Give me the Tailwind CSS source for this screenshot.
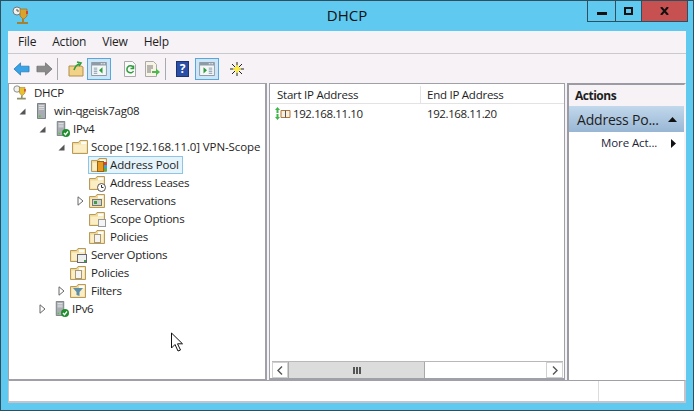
<!DOCTYPE html>
<html>
<head>
<meta charset="utf-8">
<script src="https://cdn.jsdelivr.net/npm/@tailwindcss/browser@4"></script>
</head>
<body class="w-[694px] h-[411px] overflow-hidden font-['Open_Sans','Noto_Sans',sans-serif] text-[11.5px] tracking-[-0.25px] text-[#1e1e1e]">
<svg width="0" height="0" class="absolute">
  <defs>
    <symbol id="folder" viewBox="0 0 16 16">
      <path d="M.5 14.500V3.500h6l1.500-2h7.500v13z" fill="#f0d896" stroke="#b89a5c"/>
      <path d="M9 2.500h5.500v3H9z" fill="#fdfdf8"/>
      <path d="M1.500 13.500V5.500h13v8z" fill="#fbeec4"/>
    </symbol>
    <symbol id="server" viewBox="0 0 12 18">
      <path d="M1.500.5h9v17h-9z" fill="#a9adb2" stroke="#6f7479"/>
      <path d="M3 3h6M3 5h6M3 7h6" stroke="#e6e8ea"/>
      <path d="M3 14h2v2H3z" fill="#58c04a"/>
    </symbol>
    <symbol id="check" viewBox="0 0 8 8">
      <circle cx="4" cy="4" r="4" fill="#1f8f2e"/>
      <path d="M2 4l1.500 1.700L6 2.500" fill="none" stroke="#fff" stroke-width="1.300"/>
    </symbol>
    <symbol id="open" viewBox="0 0 7 7"><path d="M6.500 0.500v6h-6z" fill="#555"/></symbol>
    <symbol id="closed" viewBox="0 0 7 10"><path d="M1 .8l5 4.200-5 4.200z" fill="#fff" stroke="#666"/></symbol>
    <symbol id="pane" viewBox="0 0 18 16">
      <path d="M.5.5h17v15H.5z" fill="#f4f6f8" stroke="#7b8a96"/>
      <path d="M1 1h16v3H1z" fill="#8d9ba6"/>
      <path d="M14 2h2M11 2h2" stroke="#fff"/>
    </symbol>
  </defs>
</svg>

<div class="relative w-[694px] h-[411px] flex flex-col bg-[#5fc9ef] border border-[#2f4f5f] px-[7px] pb-[7px]">
  <!-- title bar -->
  <div class="relative h-[30px] shrink-0 flex items-center justify-center text-[15px] tracking-normal text-[#111] pb-[1px]">
    <span>DHCP</span>
    <svg class="absolute left-[4px] top-[5px]" width="20" height="20" viewBox="0 0 20 20">
      <circle cx="5" cy="5" r="4" fill="#f0f0ee" stroke="#777"/>
      <path d="M5 3v2h2" stroke="#555" fill="none"/>
      <path d="M8 3h7v7l-3 3h-1l-3-3z" fill="#d9a32c" stroke="#8a6a1e" stroke-width=".6"/>
      <path d="M14 5h2v3h-2z" fill="#d8432c"/>
      <path d="M11 13v3M5 17h11" stroke="#a58136" stroke-width="2"/>
    </svg>
    <div class="absolute right-[-2px] top-0 flex h-[21px] border border-t-0 border-[#2f4f5f]">
      <div class="w-[28px] flex items-center justify-center border-r border-[#2f4f5f]"><div class="w-[10px] h-[3px] bg-[#111] mt-[5px]"></div></div>
      <div class="w-[26px] flex items-center justify-center border-r border-[#2f4f5f]"><div class="w-[9px] h-[8px] border-2 border-[#111]"></div></div>
      <div class="w-[45px] flex items-center justify-center bg-[#c75050]">
        <svg width="9" height="8" viewBox="0 0 9 8"><path d="M1 0l7 8M8 0L1 8" stroke="#111" stroke-width="2" fill="none"/></svg>
      </div>
    </div>
  </div>

  <!-- window body -->
  <div class="flex-1 flex flex-col bg-[#f6f2f6] min-h-0">
    <!-- menu -->
    <div class="h-[23px] shrink-0 flex items-center gap-[16px] pl-[10px] border-b border-[#c9c9cf] text-[12px] tracking-[-0.2px]">
      <span>File</span><span>Action</span><span>View</span><span>Help</span>
    </div>
    <!-- toolbar -->
    <div class="h-[29px] shrink-0 flex items-center pl-[5px]">
      <svg width="17" height="16" viewBox="0 0 18 16"><path d="M1 8l7-6.500V5h9v6H8v3.500z" fill="#38a3e6" stroke="#1e6fb0" stroke-width=".7"/></svg>
      <svg class="ml-[6px]" width="17" height="16" viewBox="0 0 18 16"><path d="M17 8l-7-6.500V5H1v6h9v3.500z" fill="#8a8a8a" stroke="#666" stroke-width=".7"/></svg>
      <div class="w-px h-[22px] bg-[#a8a8ae] ml-[4px]"></div>
      <svg class="ml-[10px]" width="16" height="16" viewBox="0 0 16 16"><path d="M1 5h12l2 1v9H1z" fill="#f2d286" stroke="#b08f4e"/><path d="M6 9c1-3 2-5 5-6M9 1l4 1-2 3" fill="none" stroke="#2f9d3c" stroke-width="1.600"/></svg>
      <div class="ml-[3px] w-[24px] h-[22px] flex items-center justify-center bg-[#cde6f7] border border-[#58a7dc]">
        <svg width="16" height="14" viewBox="0 0 18 16"><use href="#pane"/><path d="M3 7h4M3 9h4M3 11h4M3 13h4" stroke="#7f98a8"/><path d="M13 6l-4 3.500 4 3.500z" fill="#2f9d3c"/></svg>
      </div>
      <svg class="ml-[12px]" width="14" height="16" viewBox="0 0 14 16"><path d="M1.500.5h8l3 3v12h-11z" fill="#fafafa" stroke="#aaa"/><path d="M10 6a3.500 3.500 0 1 0 .5 4M10.500 4.500V7.500H7.500" fill="none" stroke="#2f9d3c" stroke-width="1.500"/></svg>
      <svg class="ml-[7px]" width="17" height="16" viewBox="0 0 17 16"><path d="M1.500.5h8l3 3v12h-11z" fill="#f7f4e6" stroke="#aaa"/><path d="M3 5h6M3 7h6M3 9h4M3 11h4" stroke="#777"/><path d="M8 10h4V7.500l4 3.500-4 3.500V12H8z" fill="#4fb84f"/></svg>
      <div class="w-px h-[22px] bg-[#a8a8ae] ml-[4px]"></div>
      <div class="ml-[10px] w-[13px] h-[16px] flex items-center justify-center bg-[#2b4fa6] border border-[#1d3470] text-white text-[12px] font-bold leading-none">?</div>
      <div class="ml-[6px] w-[24px] h-[22px] flex items-center justify-center bg-[#cde6f7] border border-[#58a7dc]">
        <svg width="16" height="14" viewBox="0 0 18 16"><use href="#pane"/><path d="M11 7h4M11 9h4M11 11h4M11 13h4" stroke="#7f98a8"/><path d="M5 6l4 3.500L5 13z" fill="#2f9d3c"/></svg>
      </div>
      <svg class="ml-[10px]" width="16" height="16" viewBox="0 0 16 16"><path d="M8 1v14M1 8h14M3 3l10 10M13 3L3 13" stroke="#222"/><circle cx="8" cy="8" r="2.500" fill="#ffef3a"/><path d="M8 4v8M4 8h8" stroke="#ffef3a" stroke-width="1.500"/></svg>
    </div>

    <!-- panes -->
    <div class="flex-1 flex min-h-0 gap-[2px]">
      <!-- tree -->
      <div class="w-[259px] shrink-0 bg-white border border-[#a0a0a8] border-r-2 whitespace-nowrap">
        <div class="h-[18px] flex items-center pl-[4px]"><svg width="16" height="16" viewBox="0 0 20 20"><circle cx="5" cy="5" r="4" fill="#f0f0ee" stroke="#777"/><path d="M8 3h7v7l-3 3h-1l-3-3z" fill="#e8c22c" stroke="#8a6a1e" stroke-width=".6"/><path d="M14 5h2v3h-2z" fill="#d8432c"/><path d="M11 13v3M5 17h11" stroke="#8f8f6a" stroke-width="2"/></svg><span class="ml-[5px]">DHCP</span></div>
        <div class="h-[18px] flex items-center pl-[10px]"><svg width="7" height="7"><use href="#open"/></svg><svg class="ml-[10px]" width="11" height="16"><use href="#server"/></svg><span class="ml-[7px]">win-qgeisk7ag08</span></div>
        <div class="h-[18px] flex items-center pl-[30px]"><svg width="7" height="7"><use href="#open"/></svg><span class="relative ml-[10px] w-[13px] h-[16px]"><svg width="10" height="15"><use href="#server"/></svg><svg class="absolute right-[-1px] bottom-0" width="8" height="8"><use href="#check"/></svg></span><span class="ml-[4px]">IPv4</span></div>
        <div class="h-[18px] flex items-center pl-[49px]"><svg width="7" height="7"><use href="#open"/></svg><svg class="ml-[7px]" width="16" height="16"><use href="#folder"/></svg><span class="ml-[3px] tracking-[-0.1px]">Scope [192.168.11.0] VPN-Scope</span></div>
        <div class="h-[18px] flex items-center pl-[79px]"><div class="flex items-center h-[18px] bg-[#e5f3fb] border border-[#8ec4e6]"><span class="relative w-[16px] h-[16px] ml-[2px]"><svg width="16" height="16"><use href="#folder"/></svg><span class="absolute left-[6px] top-[4px] w-[7px] h-[11px] bg-[#e89a1e] border border-[#9a6310]"></span><span class="absolute left-[13px] top-[5px] w-[3px] h-[3px] bg-[#d8432c]"></span><span class="absolute left-[13px] top-[8px] w-[3px] h-[3px] bg-[#3f9fd8]"></span><span class="absolute left-[13px] top-[11px] w-[3px] h-[3px] bg-[#58b04a]"></span></span><span class="ml-[3px] pr-[3px] tracking-[-0.1px]">Address Pool</span></div></div>
        <div class="h-[18px] flex items-center pl-[80px]"><span class="relative w-[16px] h-[16px]"><svg width="16" height="16"><use href="#folder"/></svg><svg class="absolute right-[-1px] bottom-[-1px]" width="9" height="9" viewBox="0 0 9 9"><circle cx="4.500" cy="4.500" r="4" fill="#fff" stroke="#555"/><path d="M4.500 2v2.500h2" stroke="#333" fill="none"/></svg></span><span class="ml-[5px]">Address Leases</span></div>
        <div class="h-[18px] flex items-center pl-[68px]"><svg width="7" height="10"><use href="#closed"/></svg><span class="relative ml-[5px] w-[16px] h-[16px]"><svg width="16" height="16"><use href="#folder"/></svg><span class="absolute left-[3px] top-[6px] w-[10px] h-[7px] bg-[#cfd6c8] border border-[#777]"></span><span class="absolute left-[5px] top-[8px] w-[3px] h-[3px] bg-[#3f9a4a]"></span></span><span class="ml-[5px]">Reservations</span></div>
        <div class="h-[18px] flex items-center pl-[80px]"><span class="relative w-[16px] h-[16px]"><svg width="16" height="16"><use href="#folder"/></svg><span class="absolute right-[-1px] bottom-0 w-[8px] h-[8px] bg-[#f4f4f4] border border-[#999]"></span></span><span class="ml-[5px]">Scope Options</span></div>
        <div class="h-[18px] flex items-center pl-[80px]"><span class="relative w-[16px] h-[16px]"><svg width="16" height="16"><use href="#folder"/></svg><span class="absolute left-[5px] top-[5px] w-[7px] h-[9px] bg-[#f4f4f4] border border-[#a8987a]"></span></span><span class="ml-[5px]">Policies</span></div>
        <div class="h-[18px] flex items-center pl-[61px]"><span class="relative w-[16px] h-[16px]"><svg width="16" height="16"><use href="#folder"/></svg><span class="absolute right-[-1px] bottom-0 w-[10px] h-[9px] bg-[#eef0f0] border border-[#667]"></span><span class="absolute right-0 bottom-px w-[2px] h-[2px] bg-[#3f9a4a]"></span></span><span class="ml-[5px]">Server Options</span></div>
        <div class="h-[18px] flex items-center pl-[61px]"><span class="relative w-[16px] h-[16px]"><svg width="16" height="16"><use href="#folder"/></svg><span class="absolute left-[5px] top-[5px] w-[7px] h-[9px] bg-[#f4f4f4] border border-[#a8987a]"></span></span><span class="ml-[5px]">Policies</span></div>
        <div class="h-[18px] flex items-center pl-[49px]"><svg width="7" height="10"><use href="#closed"/></svg><span class="relative ml-[5px] w-[16px] h-[16px]"><svg width="16" height="16"><use href="#folder"/><path d="M3 5h10L9.500 9v4l-3-1V9z" fill="#5f8fa8"/></svg></span><span class="ml-[5px]">Filters</span></div>
        <div class="h-[18px] flex items-center pl-[30px]"><svg width="7" height="10"><use href="#closed"/></svg><span class="relative ml-[9px] w-[13px] h-[16px]"><svg width="10" height="15"><use href="#server"/></svg><svg class="absolute right-[-1px] bottom-0" width="8" height="8"><use href="#check"/></svg></span><span class="ml-[4px]">IPv6</span></div>
      </div>

      <!-- list -->
      <div class="w-[296px] shrink-0 flex flex-col bg-white border border-[#a0a0a8] border-b-2 whitespace-nowrap">
        <div class="h-[20px] shrink-0 flex items-center border-b border-[#e3e3e6] pt-[2px]">
          <div class="w-[151px] h-full flex items-center pl-[7px] border-r border-[#e3e3e6]">Start IP Address</div>
          <div class="flex-1 pl-[6px]">End IP Address</div>
        </div>
        <div class="h-[20px] shrink-0 flex items-center tracking-[-0.4px]">
          <div class="w-[151px] flex items-center pl-[5px]">
            <svg width="16" height="14" viewBox="0 0 16 14"><path d="M2.500 0L5 3H3.500v3h-2V3H0z" fill="#3fb54a"/><path d="M2.500 13L5 10H3.500V7h-2v3H0z" fill="#3fb54a"/><path d="M6 3.500h9v7H6z" fill="#f7efe0" stroke="#b5763a"/><path d="M10.500 3.500v7" stroke="#555"/></svg>
            <span class="ml-[2px]">192.168.11.10</span>
          </div>
          <div class="pl-[6px]">192.168.11.20</div>
        </div>
        <div class="flex-1"></div>
        <!-- scrollbar -->
        <div class="h-[17px] shrink-0 flex items-stretch bg-white border-t border-[#b8b8bc] ml-[2px] mr-[1px]">
          <div class="w-[16px] flex items-center justify-center border border-[#d0d0d0]"><svg width="6" height="9" viewBox="0 0 6 9"><path d="M5 .5L1 4.500 5 8.500" fill="none" stroke="#555" stroke-width="1.400"/></svg></div>
          <div class="w-[137px] flex items-center justify-center gap-px bg-[#dcdcdc] border-x border-[#a8a8a8]"><div class="w-[2px] h-[7px] bg-[#555]"></div><div class="w-[2px] h-[7px] bg-[#555]"></div><div class="w-[2px] h-[7px] bg-[#555]"></div></div>
          <div class="flex-1"></div>
          <div class="w-[17px] flex items-center justify-center border border-[#d0d0d0]"><svg width="6" height="9" viewBox="0 0 6 9"><path d="M1 .5L5 4.500 1 8.500" fill="none" stroke="#555" stroke-width="1.400"/></svg></div>
        </div>
      </div>

      <!-- actions -->
      <div class="flex-1 flex flex-col bg-white border-l-2 border-r-2 border-t-2 border-[#9c9aa2] border-r-[#f6f2f6] min-w-0 whitespace-nowrap">
        <div class="h-[21px] shrink-0 flex items-center pl-[6px] bg-[#f6f2f6] font-bold text-[12px] tracking-[-0.5px]">Actions</div>
        <div class="h-[26px] shrink-0 flex items-center justify-between pl-[8px] pr-[7px] bg-gradient-to-b from-[#c2d8ec] to-[#98b6d4] text-[14px] tracking-[-0.2px]">
          <span>Address Po...</span>
          <svg width="9" height="5" viewBox="0 0 9 5"><path d="M4.500 0L9 5H0z" fill="#111"/></svg>
        </div>
        <div class="h-[22px] shrink-0 flex items-center justify-between pl-[32px] pr-[8px] text-[#1e1e3a] tracking-[-0.1px]">
          <span>More Act...</span>
          <svg width="5" height="9" viewBox="0 0 5 9"><path d="M0 0l5 4.500L0 9z" fill="#111"/></svg>
        </div>
      </div>
    </div>

    <!-- status bar -->
    <div class="h-[23px] shrink-0 flex bg-white border-t border-l border-r-2 border-b-2 border-[#c6c4ca] border-t-[#a0a0a8]">
      <div class="flex-1"></div>
      <div class="w-[86px] border-l border-[#dcdcdc]"></div>
    </div>
  </div>

  <!-- mouse pointer -->
  <svg class="absolute left-[169px] top-[331px]" width="14" height="21" viewBox="0 0 14 21"><path d="M1.500 1v15l3.500-3.500 3 6.500 2.500-1-3-6.200h5z" fill="#fff" stroke="#111"/></svg>
</div>
</body>
</html>
